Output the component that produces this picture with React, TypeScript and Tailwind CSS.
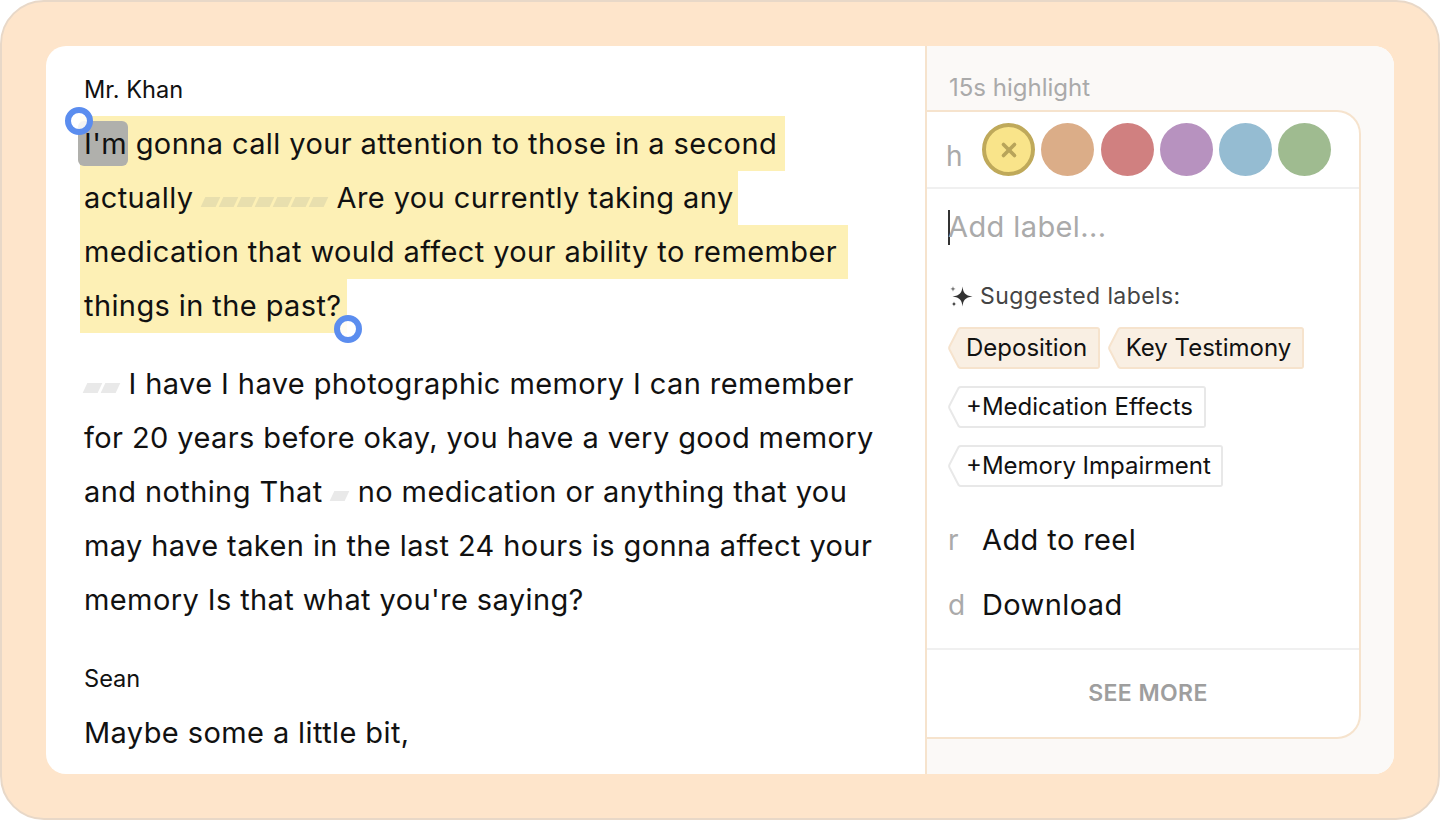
import React from 'react';
import { X } from 'lucide-react';

const inter = { fontFamily: 'Inter, "Liberation Sans", sans-serif' };

// Redacted filler word, drawn as a row of slanted dashes
const Dashes = ({ count, tone }: { count: number; tone: 'gray' | 'yellow' }) => (
  <span className="ml-[1px] mr-[2px] mt-[3px] inline-flex gap-[3px] align-middle">
    {Array.from({ length: count }).map((_, i) => (
      <span
        key={i}
        className={`block h-[10px] w-[15px] -skew-x-[25deg] ${tone === 'yellow' ? 'bg-[#e8dfae]' : 'bg-[#e9e9e9]'}`}
      ></span>
    ))}
  </span>
);

const Handle = ({ className }: { className: string }) => (
  <span className={`absolute z-10 h-[28px] w-[28px] rounded-full border-[6px] border-[#5b8def] bg-white/85 ${className}`}></span>
);

const Tag = ({ label, active }: { label: string; active?: boolean }) => {
  const fill = active ? '#f9efe3' : '#ffffff';
  const line = active ? '#f6e3cd' : '#e8e8e8';
  return (
    <div className="flex h-[42px] w-fit">
      <svg width="15" height="42" viewBox="0 0 15 42" className="shrink-0">
        <path d="M15 1 L13 1 Q11.5 1 10.5 2 L1.5 19.5 Q0.8 21 1.5 22.5 L10.5 40 Q11.5 41 13 41 L15 41 Z" fill={fill} stroke="none" />
        <path d="M15 1 L13 1 Q11.5 1 10.5 2 L1.5 19.5 Q0.8 21 1.5 22.5 L10.5 40 Q11.5 41 13 41 L15 41" fill="none" stroke={line} strokeWidth="2" />
      </svg>
      <div
        className={`flex items-center rounded-r-[3px] border-2 border-l-0 pl-[3px] pr-[10.5px] text-[24px] leading-none text-[#111] ${
          active ? 'border-[#f6e3cd] bg-[#f9efe3]' : 'border-[#e8e8e8] bg-white'
        }`}
      >
        {label}
      </div>
    </div>
  );
};

const Action = ({ hint, label }: { hint: string; label: string }) => (
  <div className="flex h-[65px] items-center">
    <span className="w-[36px] pl-[2px] text-[28px] text-[#aaaaaa]">{hint}</span>
    <span className="text-[29px] tracking-[0.4px] text-[#111]">{label}</span>
  </div>
);

const swatches = ['bg-[#dbad88]', 'bg-[#d08080]', 'bg-[#b792bf]', 'bg-[#95bcd2]', 'bg-[#9fbb90]'];

export default function App() {
  return (
    <div className="h-[820px] w-[1440px] bg-white" style={inter}>
      <div className="h-full rounded-[44px] border-2 border-[#e8d8c8] bg-[#fee5cb] p-[44px]">
        <div className="flex h-[728px] overflow-hidden rounded-[20px] bg-white">
          {/* Transcript */}
          <div className="w-[879px] shrink-0 pl-[38px] pt-[27px] text-[29px] leading-[54px] tracking-[0.4px] text-[#111]">
            <div className="h-[34px] text-[23.6px] leading-[34px] tracking-normal">Mr. Khan</div>

            <div className="relative -ml-[4px] mt-[9px]">
              <Handle className="-left-[15px] -top-[9px]" />
              <Handle className="left-[254px] top-[199px]" />
              <div className="w-fit bg-[#fdf0b5] pl-[4px] pr-[8px] pt-[1px]">
                <span className="relative">
                  <span className="absolute -left-[6px] -top-[5px] h-[45px] w-[50px] rounded-[6px] bg-[#b0b0ac]"></span>
                  <span className="relative">I'm</span>
                </span>{' '}
                gonna call your attention to those in a second
              </div>
              <div className="w-fit bg-[#fdf0b5] pl-[4px] pr-[4px]">
                actually <Dashes count={7} tone="yellow" /> Are you currently taking any
              </div>
              <div className="w-fit bg-[#fdf0b5] pl-[4px] pr-[11px]">
                medication that would affect your ability to remember
              </div>
              <div className="w-fit bg-[#fdf0b5] pl-[4px] pr-[5px]">things in the past?</div>
            </div>

            <div className="mt-[24px] whitespace-nowrap">
              <div>
                <Dashes count={2} tone="gray" /> I have I have photographic memory I can remember
              </div>
              <div>for 20 years before okay, you have a very good memory</div>
              <div>
                and nothing That <Dashes count={1} tone="gray" /> no medication or anything that you
              </div>
              <div>may have taken in the last 24 hours is gonna affect your</div>
              <div>memory Is that what you're saying?</div>
            </div>

            <div className="mt-[35px] h-[34px] text-[23.6px] leading-[34px] tracking-normal">Sean</div>
            <div className="mt-[10px]">Maybe some a little bit,</div>
          </div>

          {/* Highlight panel */}
          <div className="flex-1 border-l-2 border-[#f6e3cd] bg-[#fbf9f7] pr-[33px]">
            <div className="flex h-[64px] items-center pl-[22px] pt-[19px] text-[24px] text-[#aaaaaa]">15s highlight</div>
            <div className="h-[629px] rounded-r-[24px] border-2 border-l-0 border-[#f6e3cd] bg-white">
              <div className="flex h-[77px] items-start border-b-2 border-[#f0f0f0] pt-[11px]">
                <span className="w-[55px] pl-[19px] pt-[13px] text-[28px] leading-[40px] text-[#aaaaaa]">h</span>
                <div className="flex gap-[6.3px]">
                  <span className="flex h-[53px] w-[53px] items-center justify-center rounded-full border-[4px] border-[#bfa95a] bg-[#f9e48a]">
                    <X size={22} strokeWidth={4} className="text-[#b8a45a]" />
                  </span>
                  {swatches.map((c) => (
                    <span key={c} className={`block h-[53px] w-[53px] rounded-full ${c}`}></span>
                  ))}
                </div>
              </div>

              <div className="flex h-[76px] items-center pl-[21px]">
                <span className="h-[35px] w-[2px] bg-[#333]"></span>
                <span className="-ml-[2px] text-[29px] tracking-[0.4px] text-[#aaaaaa]">Add label...</span>
              </div>

              <div className="mt-[13px] flex h-[37px] items-center pl-[21px] text-[23px] tracking-[0.4px] text-[#444]">
                <svg width="25" height="25" viewBox="0 0 25 25" className="mr-[7px] shrink-0">
                  <path d="M14.5 2.5 C15.3 9 17 11.5 24.5 12.5 C17 13.5 15.3 16 14.5 22.5 C13.7 16 12 13.5 4.5 12.5 C12 11.5 13.7 9 14.5 2.5 Z" fill="#333" />
                  <path d="M5 2 C5.3 4 5.8 4.5 7.7 4.9 C5.8 5.3 5.3 5.8 5 7.8 C4.7 5.8 4.2 5.3 2.3 4.9 C4.2 4.5 4.7 4 5 2 Z" fill="#777" />
                  <path d="M6 17.5 C6.3 19.2 6.7 19.7 8.4 20 C6.7 20.3 6.3 20.8 6 22.5 C5.7 20.8 5.3 20.3 3.6 20 C5.3 19.7 5.7 19.2 6 17.5 Z" fill="#333" />
                </svg>
                Suggested labels:
              </div>

              <div className="flex flex-col gap-[17px] pl-[21px] pt-[12px]">
                <div className="flex gap-[8px]">
                  <Tag label="Deposition" active />
                  <Tag label="Key Testimony" active />
                </div>
                <Tag label="+Medication Effects" />
                <Tag label="+Memory Impairment" />
              </div>

              <div className="pl-[19px] pt-[20px]">
                <Action hint="r" label="Add to reel" />
                <Action hint="d" label="Download" />
              </div>

              <div className="mt-[11px] flex h-[88px] items-center justify-center border-t-2 border-[#f0f0f0] pl-[10px] text-[23px] font-semibold tracking-[0.4px] text-[#9e9e9e]">
                SEE MORE
              </div>
            </div>
          </div>
        </div>
      </div>
    </div>
  );
}
